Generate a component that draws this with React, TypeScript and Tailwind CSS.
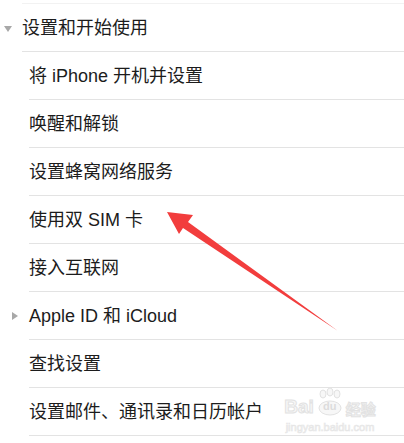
import React from "react";

const font = { fontFamily: '"Liberation Sans", "Noto Sans CJK SC", sans-serif' };

type Row = { text: string; indent: "header" | "item" | "group" };

const rows: Row[] = [
  { text: "设置和开始使用", indent: "header" },
  { text: "将 iPhone 开机并设置", indent: "item" },
  { text: "唤醒和解锁", indent: "item" },
  { text: "设置蜂窝网络服务", indent: "item" },
  { text: "使用双 SIM 卡", indent: "item" },
  { text: "接入互联网", indent: "item" },
  { text: "Apple ID 和 iCloud", indent: "group" },
  { text: "查找设置", indent: "item" },
  { text: "设置邮件、通讯录和日历帐户", indent: "item" },
];

export default function App() {
  return (
    <div className="relative w-[404px] h-[443px] bg-white overflow-hidden text-[#1c1c1c]" style={font}>
      <div className="pt-[3px]">
        <div className="ml-[22px] h-px bg-[#f2f2f2]" />
        {rows.map((r, i) => (
          <div key={i}>
            <div className="relative h-[47px] flex items-center">
              {r.indent === "header" && (
                <svg className="absolute left-[4px] top-[22px]" width="8" height="6" viewBox="0 0 8 6">
                  <polygon points="0,0 8,0 4,6" fill="#a8a8a8" />
                </svg>
              )}
              {r.indent === "group" && (
                <svg className="absolute left-[12px] top-[20px]" width="6" height="8" viewBox="0 0 6 8">
                  <polygon points="0,0 6,4 0,8" fill="#a8a8a8" />
                </svg>
              )}
              <span className={`text-[18px] leading-none ${r.indent === "header" ? "ml-[22px]" : "ml-[29px]"}`}>
                {r.text}
              </span>
            </div>
            <div className={`h-px bg-[#e3e3e3] ${r.indent === "header" ? "ml-[22px]" : "ml-[29px]"}`} />
          </div>
        ))}
      </div>

      <svg className="absolute left-0 top-0" width="404" height="443" viewBox="0 0 404 443">
        <polygon
          points="167,212 193,215 188,222 338,331 183,228 179,234"
          fill="#f23d3d"
        />
      </svg>

      <div className="absolute left-[284px] top-[388px] w-[92px] flex flex-col items-center select-none">
        <div className="flex items-end leading-none">
          <span
            className="text-[19px] font-bold text-[#f7f7f7] [-webkit-text-stroke:1px_#e2e2e2]"
            style={{ fontFamily: '"Liberation Sans", sans-serif' }}
          >
            Bai
          </span>
          <span className="relative mx-[1px] w-[30px] h-[28px] flex items-end justify-center">
            <svg className="absolute left-0 top-0" width="30" height="28" viewBox="0 0 30 28">
              <g fill="#f7f7f7" stroke="#e2e2e2" strokeWidth="1">
                <ellipse cx="8" cy="6" rx="3" ry="4" />
                <ellipse cx="15" cy="4" rx="3" ry="4" />
                <ellipse cx="22" cy="6" rx="3" ry="4" />
                <ellipse cx="15" cy="20" rx="11" ry="7" />
              </g>
            </svg>
            <span className="relative text-[11px] font-bold text-[#dcdcdc] mb-[4px]" style={{ fontFamily: '"Liberation Sans", sans-serif' }}>du</span>
          </span>
          <span
            className="text-[15px] font-bold text-[#f7f7f7] [-webkit-text-stroke:1px_#e2e2e2]"
            style={{ fontFamily: '"Noto Sans CJK SC", sans-serif' }}
          >
            经验
          </span>
        </div>
        <span
          className="text-[11px] mt-[3px] text-[#f2f2f2] [-webkit-text-stroke:0.6px_#e6e6e6]"
          style={{ fontFamily: '"Liberation Sans", sans-serif' }}
        >
          jingyan.baidu.com
        </span>
      </div>
    </div>
  );
}
